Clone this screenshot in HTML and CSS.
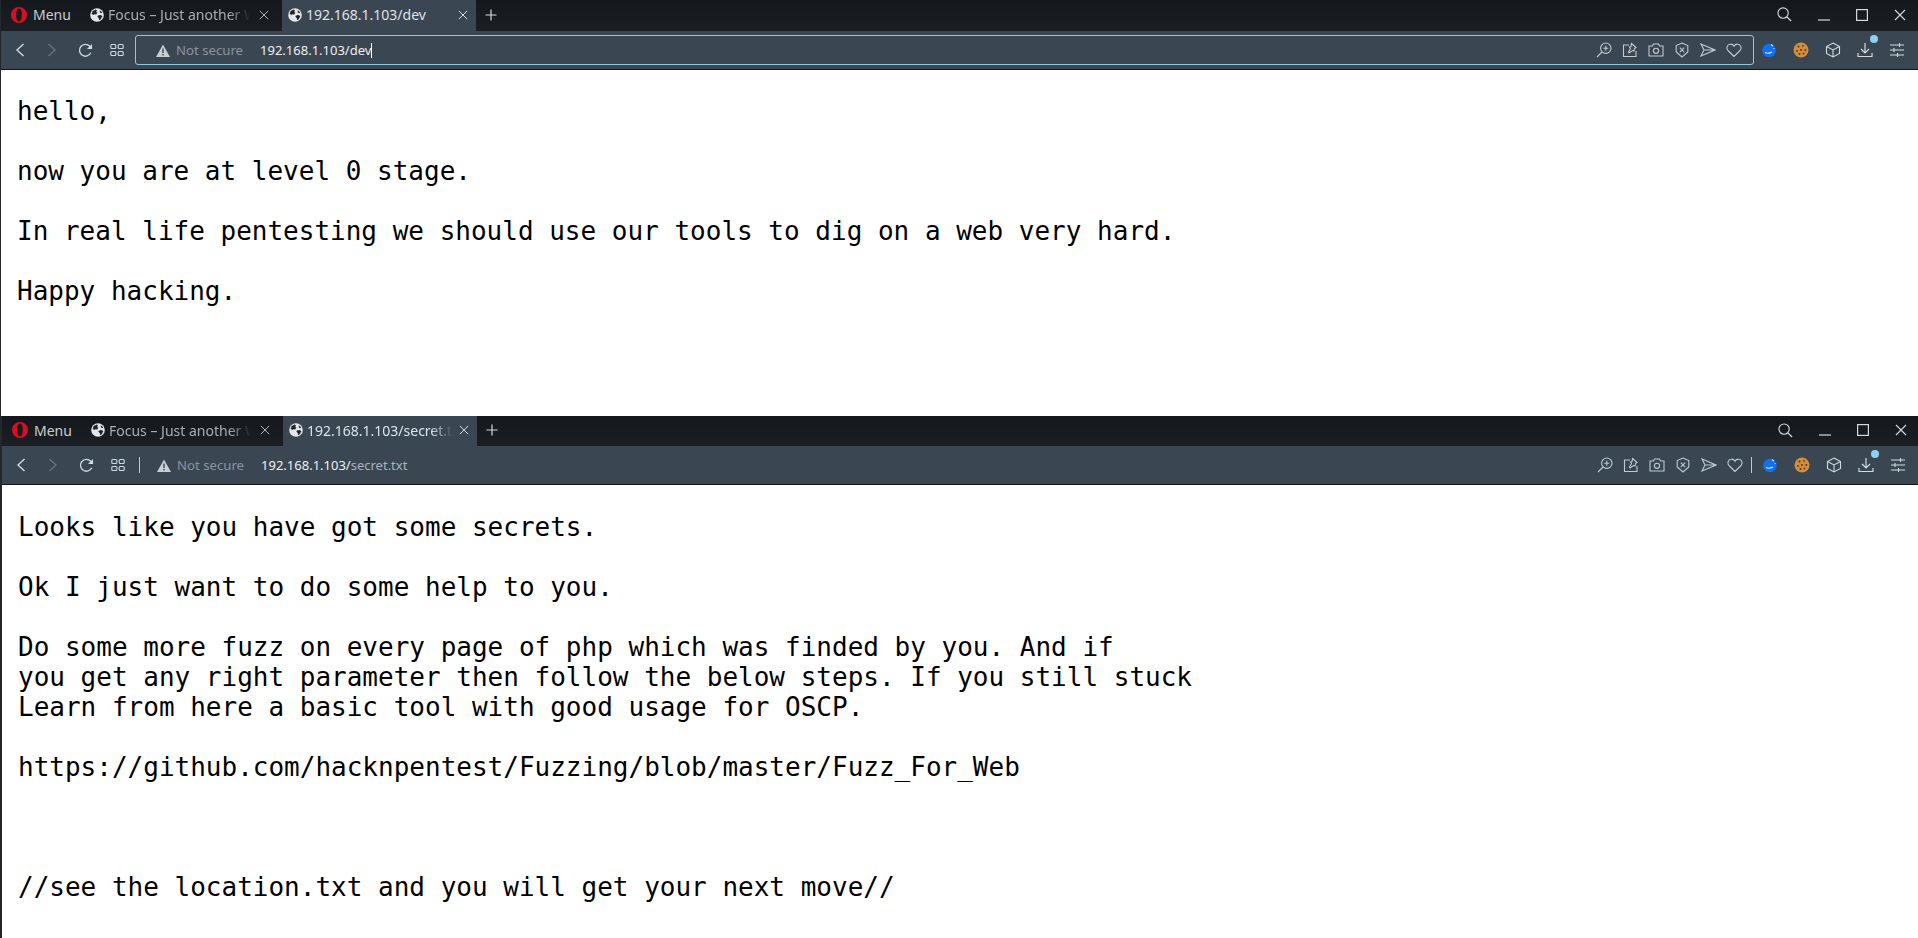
FILE: index.html
```html
<!DOCTYPE html>
<html lang="en">
<head>
    <meta charset="UTF-8">
    <title>192.168.1.103</title>
    <link rel="stylesheet" href="styles.css">
</head>
<body>
    <svg class="sprites" width="0" height="0">
        <symbol id="opera" viewBox="0 0 16 16">
            <path fill-rule="evenodd" fill="#d80f24" d="M8 0a8 8 0 1 0 0 16A8 8 0 0 0 8 0zm0 1.600c1.800 0 2.900 2.900 2.900 6.400s-1.100 6.400-2.900 6.400S5.100 11.500 5.100 8 6.200 1.600 8 1.600z"/>
        </symbol>
        <symbol id="globe" viewBox="0 0 16 16">
            <circle cx="8" cy="8" r="7.800" fill="#e4e7ea"/>
            <path fill="#20252a" d="M3 3.500 6.500 1.600 8 2.800 7 4.500 8.500 5.500 7 7.500 5 7 3.500 8 2 6.500zM9 8.500l3.500-.5 1.500 1.500-1.500 3-2 1.500-.5-2.500-1.500-1.500zM11 2.500l2 1.500 1 2-2.500-.5z"/>
        </symbol>
        <symbol id="close" viewBox="0 0 12 12">
            <path fill="none" stroke="currentColor" stroke-width="1.100" d="M1 1l10 10M11 1 1 11"/>
        </symbol>
        <symbol id="plus" viewBox="0 0 12 12">
            <path fill="none" stroke="currentColor" stroke-width="1.200" d="M6 .5v11M.5 6h11"/>
        </symbol>
        <symbol id="back" viewBox="0 0 10 14">
            <path fill="none" stroke="currentColor" stroke-width="1.400" d="M8.500 1 2 7l6.500 6"/>
        </symbol>
        <symbol id="forward" viewBox="0 0 10 14">
            <path fill="none" stroke="currentColor" stroke-width="1.400" d="M1.500 1 8 7l-6.500 6"/>
        </symbol>
        <symbol id="reload" viewBox="0 0 16 16">
            <path fill="none" stroke="currentColor" stroke-width="1.400" d="M13.600 10.400A6.300 6.300 0 1 1 12.500 3.500L14 5"/>
            <path fill="currentColor" d="M15 1v5.500H9.500z"/>
        </symbol>
        <symbol id="grid" viewBox="0 0 14 14">
            <g fill="none" stroke="currentColor" stroke-width="1.100">
                <rect x=".8" y="1.500" width="5" height="4" rx="1"/>
                <rect x="8.200" y="1.500" width="5" height="4" rx="1"/>
                <rect x=".8" y="8.500" width="5" height="4" rx="1"/>
                <rect x="8.200" y="8.500" width="5" height="4" rx="1"/>
            </g>
        </symbol>
        <symbol id="warning" viewBox="0 0 14 13">
            <path fill="#c9ced3" d="M7 .5 14 13H0z"/>
            <path fill="#3b4653" d="M6.300 4.500h1.400v4.500H6.300zM6.300 10h1.400v1.400H6.300z"/>
        </symbol>
        <symbol id="search" viewBox="0 0 16 16">
            <circle cx="6.500" cy="6.500" r="5.500" fill="none" stroke="currentColor" stroke-width="1.200"/>
            <path stroke="currentColor" stroke-width="1.400" d="M10.500 10.500 15 15"/>
        </symbol>
        <symbol id="minimize" viewBox="0 0 12 12">
            <path stroke="currentColor" stroke-width="1.200" d="M0 11h12"/>
        </symbol>
        <symbol id="maximize" viewBox="0 0 12 12">
            <rect x=".6" y=".6" width="10.800" height="10.800" fill="none" stroke="currentColor" stroke-width="1.200"/>
        </symbol>
        <symbol id="zoom" viewBox="0 0 16 16">
            <g fill="none" stroke="currentColor" stroke-width="1.100">
                <circle cx="9.800" cy="6.200" r="5.200"/>
                <path d="M6 10 1 15M9.800 3.700v5M7.300 6.200h5"/>
            </g>
        </symbol>
        <symbol id="pin" viewBox="0 0 16 16">
            <g fill="none" stroke="currentColor" stroke-width="1.100">
                <path d="M7 3H1.500v11.500h12.500V9"/>
                <path d="M9.500 1.500l4.500 4-1.500 1-.5 2.500-1.500-.5L7 11l-.5-1 2-3.500-1-1.500 1.500-.5z"/>
            </g>
        </symbol>
        <symbol id="camera" viewBox="0 0 16 16">
            <g fill="none" stroke="currentColor" stroke-width="1.100">
                <path d="M1 4h3.500l1-2h5l1 2H15v10H1z"/>
                <circle cx="8" cy="8.800" r="2.600"/>
            </g>
        </symbol>
        <symbol id="shield" viewBox="0 0 16 16">
            <g fill="none" stroke="currentColor" stroke-width="1.100">
                <path d="M8 1l5.800 2.500v6.500L8 15l-5.800-5V3.500z"/>
                <path d="M5.800 5.700l4.400 4.400M10.200 5.700 5.800 10.100"/>
            </g>
        </symbol>
        <symbol id="send" viewBox="0 0 16 16">
            <path fill="none" stroke="currentColor" stroke-width="1.100" d="M1 2l14 6-14 6 3-6zM4 8h11"/>
        </symbol>
        <symbol id="heart" viewBox="0 0 16 16">
            <path fill="none" stroke="currentColor" stroke-width="1.100" d="M8 14.500 2 8.500C.2 6.500.8 2.500 4.300 2.200 6 2 7.300 3 8 4.300 8.700 3 10 2 11.700 2.200c3.500.3 4.100 4.300 2.300 6.300z"/>
        </symbol>
        <symbol id="vpn" viewBox="0 0 16 16">
            <circle cx="8" cy="8.500" r="6.800" fill="#1170f0"/>
            <path fill="none" stroke="#dbe8fb" stroke-width="1.100" d="M4 10.500c2 1 4.500 1 7-.5M10 2.500l2 1.500M12.500 6.500h1"/>
        </symbol>
        <symbol id="cookie" viewBox="0 0 16 16">
            <circle cx="8" cy="8" r="7.500" fill="#cf8f3f"/>
            <g fill="#5d3415">
                <circle cx="5.500" cy="4.500" r="1"/>
                <circle cx="10" cy="3.800" r=".9"/>
                <circle cx="8" cy="8" r="1"/>
                <circle cx="12.300" cy="8" r="1"/>
                <circle cx="4" cy="9" r=".9"/>
                <circle cx="6.500" cy="12" r="1"/>
                <circle cx="10.500" cy="11.500" r=".9"/>
            </g>
        </symbol>
        <symbol id="cube" viewBox="0 0 16 16">
            <path fill="none" stroke="currentColor" stroke-width="1.100" d="M8 1l6.500 3.500v7L8 15l-6.500-3.500v-7zM1.500 4.500 8 8l6.500-3.500M8 8v7"/>
        </symbol>
        <symbol id="download" viewBox="0 0 16 16">
            <path fill="none" stroke="currentColor" stroke-width="1.200" d="M8 1v9.500M4 7l4 4 4-4M1 11v3.500h14V11"/>
        </symbol>
        <symbol id="sliders" viewBox="0 0 16 16">
            <path fill="none" stroke="currentColor" stroke-width="1.100" d="M1 3h14M1 8h14M1 13h14M10.500 1v4M5 6v4M8.500 11v4"/>
        </symbol>
    </svg>

    <section class="window window-upper">
        <div class="tabstrip">
            <div class="menu-btn">
                <svg class="icon-opera"><use href="#opera"/></svg>
                <span>Menu</span>
            </div>
            <div class="tab">
                <svg class="icon-globe"><use href="#globe"/></svg>
                <span class="tab-title fade">Focus – Just another W</span>
                <svg class="icon-close"><use href="#close"/></svg>
            </div>
            <div class="tab active">
                <svg class="icon-globe"><use href="#globe"/></svg>
                <span class="tab-title">192.168.1.103/dev</span>
                <svg class="icon-close"><use href="#close"/></svg>
            </div>
            <svg class="icon-plus"><use href="#plus"/></svg>
            <div class="window-controls">
                <svg class="icon-search"><use href="#search"/></svg>
                <svg class="icon-min"><use href="#minimize"/></svg>
                <svg class="icon-max"><use href="#maximize"/></svg>
                <svg class="icon-x"><use href="#close"/></svg>
            </div>
        </div>
        <div class="toolbar">
            <svg class="nav-back"><use href="#back"/></svg>
            <svg class="nav-forward"><use href="#forward"/></svg>
            <svg class="nav-reload"><use href="#reload"/></svg>
            <svg class="nav-grid"><use href="#grid"/></svg>
            <div class="address focused">
                <svg class="icon-warning"><use href="#warning"/></svg>
                <span class="not-secure">Not secure</span>
                <span class="url">192.168.1.103/dev</span><span class="caret"></span>
                <div class="address-icons">
                    <svg><use href="#zoom"/></svg>
                    <svg><use href="#pin"/></svg>
                    <svg><use href="#camera"/></svg>
                    <svg><use href="#shield"/></svg>
                    <svg><use href="#send"/></svg>
                    <svg><use href="#heart"/></svg>
                </div>
            </div>
            <div class="extensions">
                <svg><use href="#vpn"/></svg>
                <svg><use href="#cookie"/></svg>
                <svg><use href="#cube"/></svg>
                <div class="badged"><svg><use href="#download"/></svg><i class="badge"></i></div>
                <svg><use href="#sliders"/></svg>
            </div>
        </div>
        <pre class="content">hello,

now you are at level 0 stage.

In real life pentesting we should use our tools to dig on a web very hard.

Happy hacking.</pre>
    </section>

    <section class="window window-lower">
        <div class="tabstrip">
            <div class="menu-btn">
                <svg class="icon-opera"><use href="#opera"/></svg>
                <span>Menu</span>
            </div>
            <div class="tab">
                <svg class="icon-globe"><use href="#globe"/></svg>
                <span class="tab-title fade">Focus – Just another W</span>
                <svg class="icon-close"><use href="#close"/></svg>
            </div>
            <div class="tab active">
                <svg class="icon-globe"><use href="#globe"/></svg>
                <span class="tab-title fade">192.168.1.103/secret.t</span>
                <svg class="icon-close"><use href="#close"/></svg>
            </div>
            <svg class="icon-plus"><use href="#plus"/></svg>
            <div class="window-controls">
                <svg class="icon-search"><use href="#search"/></svg>
                <svg class="icon-min"><use href="#minimize"/></svg>
                <svg class="icon-max"><use href="#maximize"/></svg>
                <svg class="icon-x"><use href="#close"/></svg>
            </div>
        </div>
        <div class="toolbar">
            <svg class="nav-back"><use href="#back"/></svg>
            <svg class="nav-forward"><use href="#forward"/></svg>
            <svg class="nav-reload"><use href="#reload"/></svg>
            <svg class="nav-grid"><use href="#grid"/></svg>
            <div class="address">
                <i class="divider-left"></i>
                <svg class="icon-warning"><use href="#warning"/></svg>
                <span class="not-secure">Not secure</span>
                <span class="url">192.168.1.103/<span class="url-path">secret.txt</span></span>
                <div class="address-icons">
                    <svg><use href="#zoom"/></svg>
                    <svg><use href="#pin"/></svg>
                    <svg><use href="#camera"/></svg>
                    <svg><use href="#shield"/></svg>
                    <svg><use href="#send"/></svg>
                    <svg><use href="#heart"/></svg>
                </div>
                <i class="divider-right"></i>
            </div>
            <div class="extensions">
                <svg><use href="#vpn"/></svg>
                <svg><use href="#cookie"/></svg>
                <svg><use href="#cube"/></svg>
                <div class="badged"><svg><use href="#download"/></svg><i class="badge"></i></div>
                <svg><use href="#sliders"/></svg>
            </div>
        </div>
        <pre class="content">Looks like you have got some secrets.

Ok I just want to do some help to you.

Do some more fuzz on every page of php which was finded by you. And if
you get any right parameter then follow the below steps. If you still stuck
Learn from here a basic tool with good usage for OSCP.

https://github.com/hacknpentest/Fuzzing/blob/master/Fuzz_For_Web



//see the location.txt and you will get your next move//</pre>
    </section>
</body>
</html>
```

FILE: styles.css
```css
html, body {
    margin: 0;
    padding: 0;
    height: 100%;
    overflow: hidden;
    background: #fff;
}

body {
    display: flex;
    flex-direction: column;
    font-family: "Noto Sans", sans-serif;
    font-size: 14px;
}

.sprites {
    display: none;
}

svg {
    display: block;
    flex: none;
    width: 16px;
    height: 16px;
}

.window {
    display: flex;
    flex-direction: column;
    border-left: 1px solid #23272c;
    overflow: hidden;
}

.window-upper {
    height: 416px;
    flex: none;
}

.window-lower {
    flex: 1;
    border-left-width: 2px;
    margin-right: -1px;
}

/* tabs row */
.tabstrip {
    display: flex;
    align-items: center;
    flex: none;
    height: 31px;
    background: linear-gradient(#14181c, #1b1f24);
    color: #c3c8cd;
}

.window-lower .tabstrip {
    height: 30px;
}

.menu-btn {
    display: flex;
    align-items: center;
    gap: 6px;
    width: 81px;
    padding: 0 0 2px 10px;
    box-sizing: border-box;
    color: #c8cdd2;
}

.tab {
    display: flex;
    align-items: center;
    width: 200px;
    height: 100%;
    padding: 0 0 2px 8px;
    box-sizing: border-box;
    color: #a9aeb4;
}

.tab.active {
    width: 194px;
    padding-left: 6px;
    background: #3b4653;
    color: #dfe3e7;
}

.tab-title {
    width: 142px;
    margin-left: 4px;
    overflow: hidden;
    white-space: nowrap;
}

.tab.active .tab-title {
    width: 146px;
}

.tab-title.fade {
    -webkit-mask-image: linear-gradient(90deg, #000 85%, transparent);
    mask-image: linear-gradient(90deg, #000 85%, transparent);
}

.icon-globe {
    width: 14px;
    height: 14px;
}

.icon-close {
    width: 10px;
    height: 10px;
    margin-left: 9px;
    color: #c3c8cd;
}

.tab.active .icon-close {
    margin-left: 6px;
    color: #e6e9ec;
}

.icon-plus {
    width: 12px;
    height: 12px;
    margin: 0 0 2px 9px;
    color: #d5d9dd;
}

.window-controls {
    display: flex;
    align-items: center;
    margin-left: auto;
    padding: 0 12px 2px 0;
    color: #d5d9dd;
}

.icon-search {
    width: 15px;
    height: 15px;
}

.icon-min,
.icon-max,
.icon-x {
    width: 12px;
    height: 12px;
    margin-left: 26px;
}

/* address row */
.toolbar {
    display: flex;
    align-items: center;
    flex: none;
    height: 38px;
    background: #3b4653;
    border-bottom: 1px solid #14181c;
    color: #d5d9dd;
}

.nav-back {
    width: 10px;
    height: 14px;
    margin-left: 14px;
}

.nav-forward {
    width: 10px;
    height: 14px;
    margin-left: 22px;
    color: #68727d;
}

.nav-reload {
    width: 15px;
    height: 15px;
    margin-left: 21px;
}

.nav-grid {
    width: 14px;
    height: 14px;
    margin-left: 17px;
}

.address {
    display: flex;
    align-items: center;
    flex: 1;
    height: 30px;
    margin-left: 11px;
    padding-left: 20px;
    box-sizing: border-box;
    border: 1px solid transparent;
    border-radius: 3px;
    position: relative;
}

.address.focused {
    border-color: #8ec9e6;
}

.icon-warning {
    width: 14px;
    height: 13px;
}

.not-secure {
    margin-left: 6px;
    font-size: 13.200px;
    color: #8a949e;
}

.url {
    margin-left: 17px;
    font-size: 13px;
    color: #eef0f2;
}

.url-path {
    color: #aab2ba;
}

.caret {
    width: 1px;
    height: 15px;
    background: #fff;
}

.address-icons {
    display: flex;
    align-items: center;
    gap: 10px;
    margin-left: auto;
    padding-right: 8px;
    color: #c3c9cf;
}

.address.focused .address-icons {
    padding-right: 11px;
}

.divider-left,
.divider-right {
    width: 1px;
    height: 16px;
    background: #c3c9cf;
}

.divider-left {
    position: absolute;
    left: 2px;
}

.divider-right {
    margin-right: 2px;
}

.extensions {
    display: flex;
    align-items: center;
    gap: 16px;
    width: 164px;
    padding-left: 7px;
    box-sizing: border-box;
}

.badged {
    position: relative;
}

.badge {
    position: absolute;
    top: -7px;
    right: -5px;
    width: 8px;
    height: 8px;
    border-radius: 50%;
    background: #8fd0f5;
}

/* page text */
.content {
    flex: 1;
    margin: 0;
    padding: 26px 0 0 16px;
    font-family: "DejaVu Sans Mono", monospace;
    font-size: 26px;
    line-height: 30px;
    color: #000;
    background: #fff;
}

.window-lower .content {
    padding-top: 27px;
}
```
